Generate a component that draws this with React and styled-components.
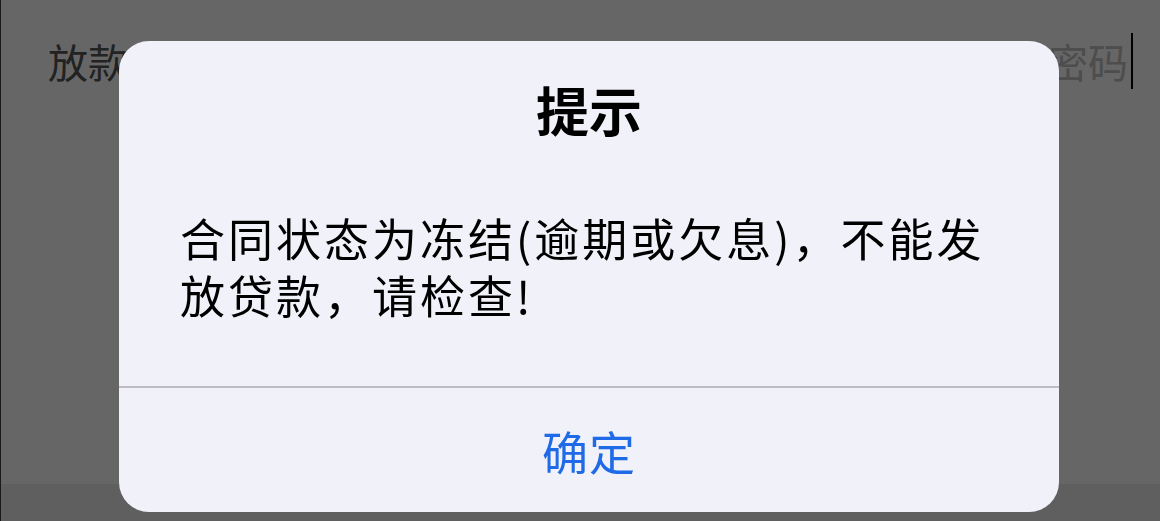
import React from "react";
import styled, { createGlobalStyle } from "styled-components";

const GlobalStyle = createGlobalStyle`
  html, body {
    margin: 0;
    padding: 0;
    height: 100%;
    overflow: hidden;
  }
  body {
    font-family: "Noto Sans CJK SC", "Noto Sans", sans-serif;
  }
  #root {
    height: 100%;
  }
`;

const Page = styled.div`
  position: relative;
  height: 100vh;
  display: flex;
  flex-direction: column;
  background: #ffffff;
  border-left: 1px solid #404040;
  box-sizing: border-box;
`;

const FormRow = styled.div`
  height: 122px;
  display: flex;
  align-items: center;
  justify-content: space-between;
  padding: 0 27px 0 47px;
`;

const Label = styled.span`
  font-size: 40px;
  color: #555;
  white-space: nowrap;
`;

const Input = styled.div`
  display: flex;
  align-items: center;
  font-size: 40px;
  color: #c0c0c0;
  white-space: nowrap;
`;

const Caret = styled.span`
  display: inline-block;
  width: 2px;
  height: 56px;
  margin-left: 3px;
  background: #000;
`;

const Spacer = styled.div`
  flex: 1;
`;

const Footer = styled.div`
  height: 37px;
  background: #ededed;
`;

const Overlay = styled.div`
  position: fixed;
  inset: 0;
  background: rgba(0, 0, 0, 0.6);
  display: flex;
  align-items: flex-start;
  padding: 41px 0 0 119px;
  box-sizing: border-box;
`;

const Dialog = styled.div`
  width: 940px;
  height: 471px;
  background: #f1f1f9;
  border-radius: 30px;
  display: flex;
  flex-direction: column;
  overflow: hidden;
`;

const Title = styled.h2`
  margin: 0;
  padding-top: 33px;
  font-size: 53px;
  line-height: 70px;
  font-weight: 700;
  text-align: center;
  color: #000;
`;

const Message = styled.p`
  margin: 0;
  padding: 65px 60px 0 61px;
  font-size: 45px;
  letter-spacing: 3px;
  line-height: 57px;
  color: #000;
  flex: 1;
`;

const Divider = styled.div`
  height: 2px;
  background: #bdbdc1;
`;

const ActionButton = styled.button`
  height: 124px;
  border: none;
  background: transparent;
  font-family: inherit;
  font-size: 46px;
  color: ${(p) => p.$color || "#1f6ae6"};
  letter-spacing: 1px;
  cursor: pointer;
  padding: 0;
`;

export default function App() {
  return (
    <>
      <GlobalStyle />
      <Page>
        <FormRow>
          <Label>放款密码</Label>
          <Input>
            请输入交易密码
            <Caret />
          </Input>
        </FormRow>
        <Spacer />
        <Footer />
        <Overlay>
          <Dialog>
            <Title>提示</Title>
            <Message>合同状态为冻结(逾期或欠息)，不能发放贷款，请检查!</Message>
            <Divider />
            <ActionButton>确定</ActionButton>
          </Dialog>
        </Overlay>
      </Page>
    </>
  );
}
